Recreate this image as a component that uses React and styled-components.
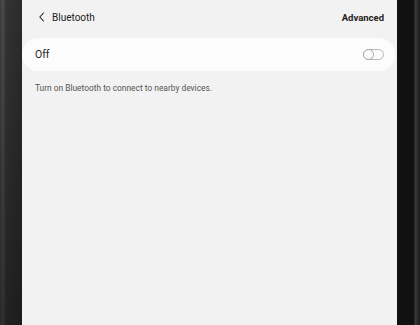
import React from "react";
import styled, { createGlobalStyle } from "styled-components";

const Global = createGlobalStyle`
  html, body { margin: 0; padding: 0; background: #111; }
  body { font-family: Roboto, "Noto Sans", sans-serif; }
`;

const Device = styled.div`
  display: flex;
  width: 420px;
  height: 325px;
  overflow: hidden;
`;

const LeftBezel = styled.div`
  width: 22px;
  flex: none;
  background:
    linear-gradient(90deg, #2c2c2c 0px, #4a4a4a 1px, #454545 4px, #333 6px, #2b2b2b 22px);
  position: relative;
  &::after {
    content: "";
    position: absolute;
    inset: 0;
    background: linear-gradient(180deg, rgba(0,0,0,0) 0%, rgba(0,0,0,0.35) 100%);
  }
`;

const RightBezel = styled.div`
  width: 23px;
  flex: none;
  background: linear-gradient(90deg, #121212 0px, #111 17px, #3c3c3c 18px, #2e2e2e 20px, #1c1c1c 23px);
`;

const Screen = styled.div`
  flex: 1;
  background: #f2f2f2;
  display: flex;
  flex-direction: column;
`;

const Header = styled.div`
  height: 34px;
  display: flex;
  align-items: center;
  padding: 0 13px 0 13px;
`;

const Back = styled.span`
  width: 14px;
  height: 14px;
  display: flex;
  align-items: center;
  justify-content: center;
  margin-right: 3px;
`;

const Title = styled.span`
  font-size: 10px;
  color: #222;
  flex: 1;
`;

const Action = styled.span`
  font-size: 9.5px;
  font-weight: 700;
  color: #222;
`;

const Card = styled.div`
  margin: 4px 2px 0 0;
  height: 33px;
  border-radius: 16px;
  background: #fcfcfc;
  display: flex;
  align-items: center;
  justify-content: space-between;
  padding: 0 11px 0 13px;
`;

const Label = styled.span`
  font-size: 10.5px;
  color: #222;
`;

const Toggle = styled.span`
  position: relative;
  width: 21px;
  height: 11px;
  border: 1px solid #b8b8b8;
  border-radius: 6px;
  box-sizing: border-box;
  &::before {
    content: "";
    position: absolute;
    left: -1px;
    top: -1px;
    width: 11px;
    height: 11px;
    box-sizing: border-box;
    border: 1px solid #a5a5a5;
    border-radius: 50%;
    background: #fcfcfc;
  }
`;

const Desc = styled.p`
  margin: 12px 0 0 13px;
  font-size: 8.4px;
  color: #555;
`;

export default function App() {
  return (
    <>
      <Global />
      <Device>
        <LeftBezel />
        <Screen>
          <Header>
            <Back>
              <svg width="8" height="10" viewBox="0 0 8 10">
                <path d="M5.5 1 L1.8 5 L5.5 9" fill="none" stroke="#222" strokeWidth="1.1" strokeLinecap="round" strokeLinejoin="round" />
              </svg>
            </Back>
            <Title>Bluetooth</Title>
            <Action>Advanced</Action>
          </Header>
          <Card>
            <Label>Off</Label>
            <Toggle />
          </Card>
          <Desc>Turn on Bluetooth to connect to nearby devices.</Desc>
        </Screen>
        <RightBezel />
      </Device>
    </>
  );
}
